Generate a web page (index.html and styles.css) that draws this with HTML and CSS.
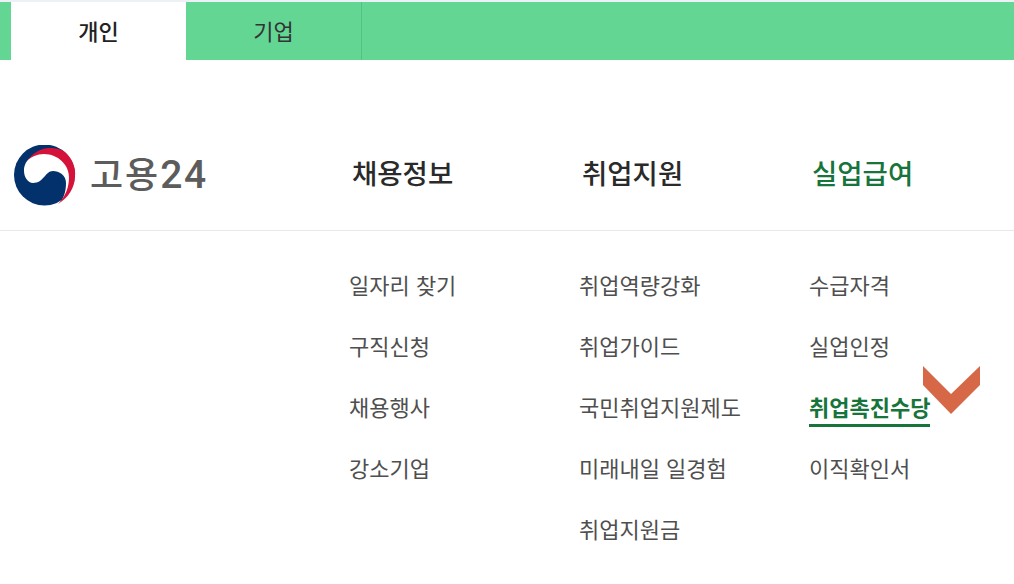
FILE: index.html
```html
<html lang="ko">
  <head>
    <meta charset="utf-8" />
    <title>고용24</title>
    <link rel="stylesheet" href="styles.css">
  </head>
  <body>
    <div class="tab-bar">
      <a class="tab tab-active">개인</a>
      <a class="tab">기업</a>
    </div>

    <div class="header">
      <div class="logo">
        <svg class="logo-mark" width="62" height="62" viewBox="0 0 62 62">
          <circle cx="30.5" cy="30" r="30.5" fill="#03316b" />
          <path d="M10 26 C10 12 24 6 36 8 C50 10 64 26 60 42 C57 50 50 56 44 60 C50 54 52 46 52 38 C52 30 45 26 39 26 C31 26 30 38 19 38 C14 38 10 32 10 26 Z" fill="#fff" />
          <path d="M13 16 C19 8 27 3 35 3 C42 3 47 4 51 7 C59 14 62 24 61 31 C61 43 54 53 44 59 C52 51 55 42 55 32 C55 20 44 9 30 9 C23 9 17 12 13 16 Z" fill="#d5123a" />
        </svg>
        <span class="logo-text">고용<span class="logo-num">24</span></span>
      </div>
    </div>

    <div class="menu">
      <ul class="menu-col">
        <li class="menu-title">채용정보</li>
        <li>일자리 찾기</li>
        <li>구직신청</li>
        <li>채용행사</li>
        <li>강소기업</li>
      </ul>
      <ul class="menu-col">
        <li class="menu-title">취업지원</li>
        <li>취업역량강화</li>
        <li>취업가이드</li>
        <li>국민취업지원제도</li>
        <li>미래내일 일경험</li>
        <li>취업지원금</li>
      </ul>
      <ul class="menu-col">
        <li class="menu-title menu-title-on">실업급여</li>
        <li>수급자격</li>
        <li>실업인정</li>
        <li class="marker-row">
          <span class="item-on">취업촉진수당</span>
          <svg class="marker" width="58" height="48" viewBox="0 0 58 48">
            <path d="M1 0 L29 28 L58 0 L58 19 L29 48 L1 19 Z" fill="#d66848" />
          </svg>
        </li>
        <li>이직확인서</li>
      </ul>
    </div>
  </body>
</html>
```

FILE: styles.css
```css
body {
  margin: 0;
  background: #fff;
  font-family: "Noto Sans CJK KR", "Noto Sans", sans-serif;
  color: #444;
}

.tab-bar {
  display: flex;
  height: 58px;
  padding-left: 11px;
  background: #63d694;
  border-top: 2px solid #edf1f5;
}

.tab {
  width: 175px;
  line-height: 56px;
  text-align: center;
  font-size: 22px;
  color: #333;
}

.tab + .tab {
  border-right: 1px solid #55c083;
}

.tab-active {
  background: #fff;
  font-weight: 500;
  color: #222;
}

.header {
  height: 170px;
  border-bottom: 1px solid #e9e9e9;
}

.logo {
  display: flex;
  align-items: flex-start;
  gap: 14px;
  padding: 85px 0 0 14px;
}

.logo-text {
  font-size: 36px;
  line-height: 54px;
  letter-spacing: 2px;
  font-weight: 500;
  color: #5c5c5c;
}

.logo-num {
  font-family: "Roboto", sans-serif;
  font-size: 39px;
  letter-spacing: 1.5px;
}

.menu {
  display: flex;
  padding-left: 349px;
}

.menu-col {
  position: relative;
  flex: none;
  width: 230px;
  margin: 0;
  padding: 23px 0 0;
  list-style: none;
}

.menu-col li {
  height: 61px;
  line-height: 61px;
  font-size: 22px;
  color: #4f4f4f;
}

.menu-col .menu-title {
  position: absolute;
  top: -89px;
  left: 3px;
  height: auto;
  font-size: 27.5px;
  font-weight: 500;
  color: #2a2a2a;
}

.menu-col .menu-title-on {
  color: #17743a;
}

.marker-row {
  position: relative;
}

.item-on {
  display: inline-block;
  line-height: 35px;
  font-weight: 700;
  color: #17743a;
  border-bottom: 3px solid #17743a;
}

.marker {
  position: absolute;
  left: 113px;
  top: -10px;
}
```
